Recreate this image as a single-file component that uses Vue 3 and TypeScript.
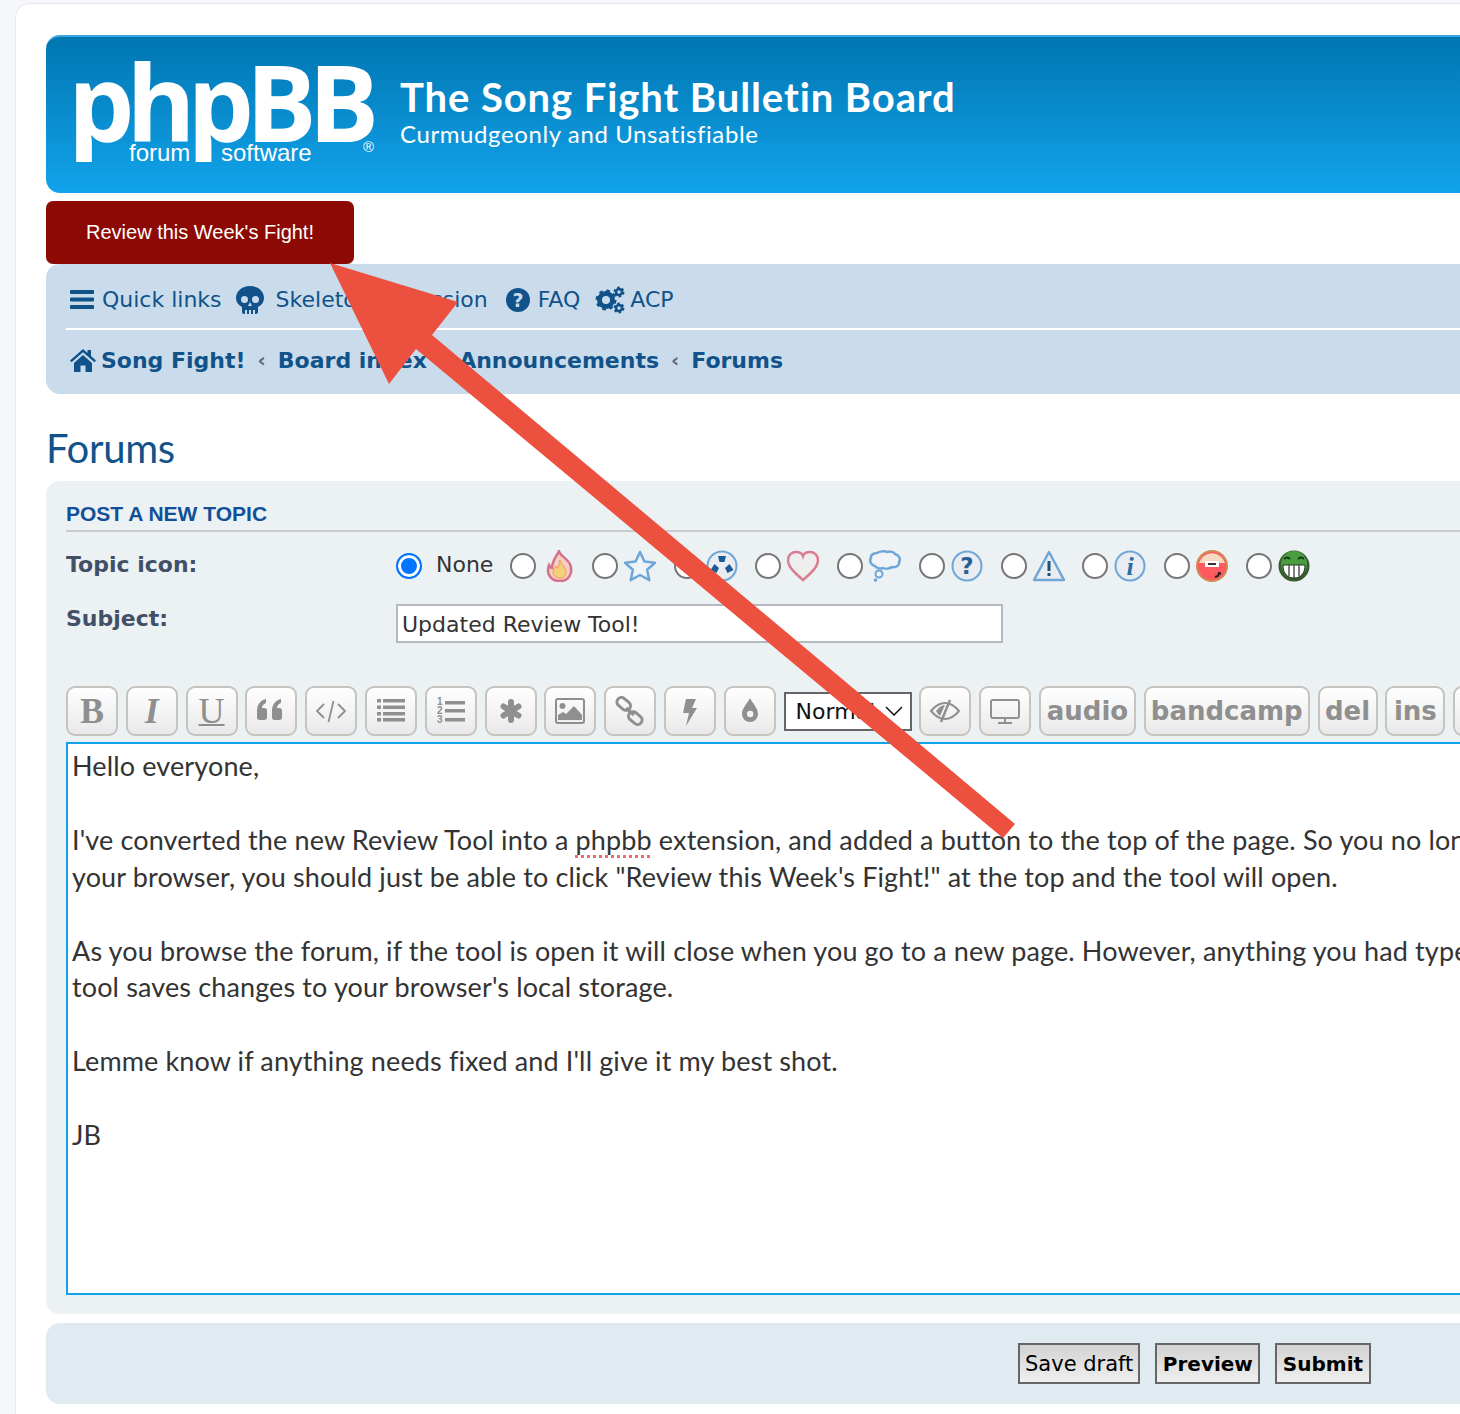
<script setup lang="ts">
interface TopicIcon {
  id: string;
}

interface ToolButton {
  id: string;
  label?: string;
  width?: number;
}

const topicIcons: TopicIcon[] = [
  { id: "fire" },
  { id: "star" },
  { id: "radio" },
  { id: "heart" },
  { id: "thought" },
  { id: "question" },
  { id: "warning" },
  { id: "info" },
  { id: "mad" },
  { id: "grin" },
];

const leftTools: ToolButton[] = [
  { id: "b", label: "B" },
  { id: "i", label: "I" },
  { id: "u", label: "U" },
  { id: "quote" },
  { id: "code" },
  { id: "list" },
  { id: "numlist" },
  { id: "star" },
  { id: "image" },
  { id: "link" },
  { id: "flash" },
  { id: "color" },
];

const rightTools: ToolButton[] = [
  { id: "spoiler" },
  { id: "video" },
  { id: "text", label: "audio", width: 97 },
  { id: "text", label: "bandcamp", width: 166 },
  { id: "text", label: "del", width: 60 },
  { id: "text", label: "ins", width: 60 },
  { id: "text", label: "sub", width: 80 },
];
</script>

<template>
  <div class="wrap">
    <header class="headerbar">
      <div class="logo">
        <span class="logo-main">phpBB</span>
        <span class="logo-forum">forum</span>
        <span class="logo-software">software</span>
        <span class="logo-reg">®</span>
      </div>
      <div class="site-desc">
        <h1>The Song Fight Bulletin Board</h1>
        <p>Curmudgeonly and Unsatisfiable</p>
      </div>
    </header>

    <a class="review-btn">Review this Week's Fight!</a>

    <nav class="navbar">
      <ul class="nav-main">
        <li class="quick-item">
          <svg class="nav-icon" width="24" height="22" viewBox="0 0 24 22">
            <rect y="1" width="24" height="4" rx="1" />
            <rect y="8.500" width="24" height="4" rx="1" />
            <rect y="16" width="24" height="4" rx="1" />
          </svg>
          Quick links
        </li>
        <li class="skull-item">
          <svg class="nav-icon" width="28" height="28" viewBox="0 0 28 28">
            <path fill-rule="evenodd" d="M14 0C6 0 0 5 0 12c0 4 2 7 6 9v5c0 1 1 2 2 2h1v-4h2v4h2v-4h2v4h2v-4h2v4h1c1 0 2-1 2-2v-5c4-2 6-5 6-9 0-7-6-12-14-12ZM8.500 10a3.500 3.500 0 1 1 0 7 3.500 3.500 0 0 1 0-7Zm11 0a3.500 3.500 0 1 1 0 7 3.500 3.500 0 0 1 0-7ZM14 16l2 4h-4Z" />
          </svg>
          Skeleton Discussion
        </li>
        <li class="faq-item">
          <svg class="nav-icon" width="24" height="24" viewBox="0 0 24 24">
            <circle cx="12" cy="12" r="12" />
            <text x="12" y="19" class="faq-mark">?</text>
          </svg>
          FAQ
        </li>
        <li class="acp-item">
          <svg class="nav-icon cogs" width="30" height="28" viewBox="0 0 30 28">
            <circle cx="11" cy="14" r="6.500" class="cog-ring" />
            <circle cx="11" cy="14" r="9" class="cog-teeth" />
            <circle cx="24" cy="6" r="3" class="cog-ring small" />
            <circle cx="24" cy="6" r="4.500" class="cog-teeth small" />
            <circle cx="24" cy="22" r="3" class="cog-ring small" />
            <circle cx="24" cy="22" r="4.500" class="cog-teeth small" />
          </svg>
          ACP
        </li>
      </ul>
      <ul class="nav-crumbs">
        <li>
          <svg class="nav-icon" width="26" height="24" viewBox="0 0 26 24">
            <path d="M13 1 0 12.500l1.500 1.700L13 4.200l11.500 10 1.500-1.700L21 8V2h-3.500v3ZM4 15v9h6.500v-6.500h5V24H22v-9L13 7Z" />
          </svg>
          Song Fight!
        </li>
        <li class="sep">‹</li>
        <li>Board index</li>
        <li class="sep">‹</li>
        <li>Announcements</li>
        <li class="sep">‹</li>
        <li>Forums</li>
      </ul>
    </nav>

    <h2 class="forum-title">Forums</h2>

    <section class="panel">
      <h3>POST A NEW TOPIC</h3>

      <div class="field topic-field">
        <label>Topic icon:</label>
        <div class="topic-icons">
          <span class="radio checked"></span>
          <span class="none-label">None</span>
          <span v-for="icon in topicIcons" :key="icon.id" class="topic-option">
            <span class="radio"></span>
            <svg width="32" height="32" viewBox="0 0 32 32" class="topic-svg">
              <template v-if="icon.id === 'fire'">
                <g transform="translate(2 0)">
                  <path d="M15 1c1 5 8 7 11 13 3 8 0 17-10 17S2 23 5 15c1 2 2 3 3 3 0-7 3-9 7-17Z" fill="#f3cfc4" stroke="#d9708a" stroke-width="2.500" />
                  <path d="M16 10c0 4 6 7 6 12 0 4-3 6-6 6s-7-2-7-6c0-3 2-4 3-6 1 1 1 2 2 2 1-2 1-5 2-8Z" fill="#f6cf7a" stroke="#ec9a52" />
                </g>
              </template>
              <template v-else-if="icon.id === 'star'">
                <path d="M16 2l4.400 9.600 10.600 1.200-7.900 7 2.200 10.400L16 25l-9.300 5.200 2.200-10.400-7.900-7 10.600-1.200Z" fill="#eef3f8" stroke="#6fa6d8" stroke-width="2.500" stroke-linejoin="round" />
              </template>
              <template v-else-if="icon.id === 'radio'">
                <circle cx="16" cy="16" r="14.500" fill="#e9edf1" stroke="#6fa6d8" stroke-width="2" />
                <path d="M12 6h8l-1.500 6h-5ZM4.500 20l4-6 4.500 4-2.500 5ZM27.500 20l-4-6-4.500 4 2.500 5Z" fill="#1d5a96" />
              </template>
              <template v-else-if="icon.id === 'heart'">
                <path d="M16 30C8 23 1 17 1 10c0-5 4-8 8-8 3 0 6 1 7 4 1-3 4-4 7-4 4 0 8 3 8 8 0 7-7 13-15 20Z" fill="#efeeee" stroke="#d97d90" stroke-width="2.500" />
              </template>
              <template v-else-if="icon.id === 'thought'">
                <path d="M8 3c3-2 8-2 10-1 3-1 7 0 8 2 4 1 6 5 4 8 1 3-3 6-7 5-2 2-7 2-9 1-3 1-7 0-8-2-4-1-6-5-4-8-1-3 3-5 6-5Z" fill="#f1f4f7" stroke="#6fa6d8" stroke-width="2.500" />
                <circle cx="10" cy="24" r="3.500" fill="#f1f4f7" stroke="#6fa6d8" stroke-width="2" />
                <circle cx="6.500" cy="30" r="1.800" fill="#6fa6d8" />
              </template>
              <template v-else-if="icon.id === 'question'">
                <circle cx="16" cy="16" r="14.500" fill="#e9edf1" stroke="#6fa6d8" stroke-width="2" />
                <text x="16" y="24" class="mark-q">?</text>
              </template>
              <template v-else-if="icon.id === 'warning'">
                <path d="M16 2 31 30H1Z" fill="#e9edf1" stroke="#6fa6d8" stroke-width="2.500" stroke-linejoin="round" />
                <rect x="14.500" y="11" width="3" height="10" fill="#1f4f80" />
                <rect x="14.500" y="23" width="3" height="3" fill="#1f4f80" />
              </template>
              <template v-else-if="icon.id === 'info'">
                <circle cx="16" cy="16" r="14.500" fill="#e9edf1" stroke="#6fa6d8" stroke-width="2" />
                <text x="16" y="25" class="mark-i">i</text>
              </template>
              <template v-else-if="icon.id === 'mad'">
                <circle cx="16" cy="16" r="15" fill="#ff5a5f" stroke="#d08a55" stroke-width="2" />
                <path d="M3 13a13.500 13.500 0 0 1 26 0Z" fill="#f3d9c2" />
                <rect x="9" y="11" width="14" height="6" rx="1" fill="#fff" />
                <rect x="12" y="13" width="8" height="2" fill="#333" />
                <path d="M19 27l3-1 1-3 2 1" fill="none" stroke="#222" stroke-width="2" />
              </template>
              <template v-else>
                <circle cx="16" cy="16" r="15.500" fill="#3a5a32" />
                <circle cx="16" cy="14" r="13" fill="#4a9e40" />
                <path d="M5 15h22c0 8-4 13-11 13S5 23 5 15Z" fill="#fff" stroke="#1d3a1d" />
                <path d="M11 15v11M16 15v13M21 15v11" stroke="#555" stroke-width="1.500" />
                <path d="M6 9q3-3 6 0M20 9q3-3 6 0" fill="none" stroke="#163a16" stroke-width="2" />
              </template>
            </svg>
          </span>
        </div>
      </div>

      <div class="field subject-field">
        <label>Subject:</label>
        <div class="subject-input">Updated Review Tool!</div>
      </div>

      <div class="toolbar">
        <button v-for="tool in leftTools" :key="tool.id" class="tool">
          <span v-if="tool.label" :class="['tool-letter', 'tool-' + tool.id]">{{ tool.label }}</span>
          <svg v-else width="34" height="34" viewBox="0 0 34 34" class="tool-svg">
            <g v-if="tool.id === 'quote'">
              <path d="M3 17c0-7 4-11 9-12v4c-3 1-4 3-4 5h2.500c1.400 0 2.500 1.100 2.500 2.500v7c0 1.400-1.100 2.500-2.500 2.500h-5C4.100 26 3 24.900 3 23.500ZM18 17c0-7 4-11 9-12v4c-3 1-4 3-4 5h2.500c1.400 0 2.500 1.100 2.500 2.500v7c0 1.400-1.100 2.500-2.500 2.500h-5c-1.400 0-2.500-1.100-2.500-2.500Z" />
            </g>
            <g v-else-if="tool.id === 'code'" class="tool-stroke" stroke-width="1.800">
              <path d="M10 10 3 17l7 7M24 10l7 7-7 7M19.500 7l-5 21" />
            </g>
            <g v-else-if="tool.id === 'list'">
              <rect x="3" y="5" width="4" height="3.500" />
              <rect x="3" y="11.500" width="4" height="3.500" />
              <rect x="3" y="18" width="4" height="3.500" />
              <rect x="3" y="24" width="4" height="3.500" />
              <rect x="9" y="5" width="22" height="3.500" />
              <rect x="9" y="11.500" width="22" height="3.500" />
              <rect x="9" y="18" width="22" height="3.500" />
              <rect x="9" y="24" width="22" height="3.500" />
            </g>
            <g v-else-if="tool.id === 'numlist'">
              <text x="3" y="11" class="num-mark">1</text>
              <text x="3" y="20" class="num-mark">2</text>
              <text x="3" y="29" class="num-mark">3</text>
              <rect x="11" y="7" width="20" height="3.500" />
              <rect x="11" y="15" width="20" height="3.500" />
              <rect x="11" y="24" width="20" height="3.500" />
            </g>
            <g v-else-if="tool.id === 'star'" class="tool-stroke" stroke-width="6" stroke-linecap="round">
              <path d="M17 8v18M9.500 12.500l15 9M24.500 12.500l-15 9" />
            </g>
            <g v-else-if="tool.id === 'image'">
              <rect x="3" y="5" width="28" height="24" rx="2" class="tool-stroke" stroke-width="2" />
              <circle cx="9.500" cy="12" r="3" />
              <path d="M5 26v-5l5-3 3 2 8-8 8 9v5Z" />
            </g>
            <g v-else-if="tool.id === 'link'" class="tool-stroke" stroke-width="3">
              <rect x="3" y="5" width="15" height="9" rx="4.500" transform="rotate(40 10 10)" />
              <rect x="15" y="20" width="15" height="9" rx="4.500" transform="rotate(40 23 24)" />
              <path d="M13 14l8 7" />
            </g>
            <g v-else-if="tool.id === 'flash'">
              <path d="M13 5h10l-4 9h5L13 32l3-13h-6Z" />
            </g>
            <g v-else-if="tool.id === 'color'">
              <path fill-rule="evenodd" d="M17 4c3 6 8 10 8 16a8 8 0 0 1-16 0c0-6 5-10 8-16Zm-3 16a3.200 3.200 0 1 0 6.400 0 3.200 3.200 0 0 0-6.400 0Z" />
            </g>
          </svg>
        </button>

        <div class="size-select">
          <span>Normal</span>
          <svg width="18" height="10" viewBox="0 0 18 10">
            <path d="M1 1l8 8 8-8" fill="none" stroke="#111" stroke-width="1.500" />
          </svg>
        </div>

        <button v-for="(tool, index) in rightTools" :key="index" class="tool" :style="tool.width ? { width: tool.width + 'px' } : undefined">
          <span v-if="tool.label" class="tool-word">{{ tool.label }}</span>
          <svg v-else-if="tool.id === 'spoiler'" width="34" height="34" viewBox="0 0 34 34" class="tool-svg">
            <g class="tool-stroke" stroke-width="2">
              <path d="M3 17c5-6 9-8 14-8s9 2 14 8c-5 6-9 8-14 8s-9-2-14-8Z" />
            </g>
            <path d="M8 17c3-4 6-6 9-6l-5 11c-1-1-3-3-4-5Z" />
            <path d="M22 6 13 28" class="tool-stroke" stroke-width="2.500" />
          </svg>
          <svg v-else width="34" height="34" viewBox="0 0 34 34" class="tool-svg">
            <g class="tool-stroke" stroke-width="2">
              <rect x="3" y="6" width="28" height="18" rx="2" />
              <path d="M17 24v4M10 29h14" />
            </g>
          </svg>
        </button>
      </div>

      <div class="message">
        <div class="msg-line">Hello everyone,</div>
        <div class="msg-line">&nbsp;</div>
        <div class="msg-line">I've converted the new Review Tool into a <span class="misspelled">phpbb</span> extension, and added a button to the top of the page. So you no longer need to install anything in</div>
        <div class="msg-line">your browser, you should just be able to click "Review this Week's Fight!" at the top and the tool will open.</div>
        <div class="msg-line">&nbsp;</div>
        <div class="msg-line">As you browse the forum, if the tool is open it will close when you go to a new page. However, anything you had typed will still be there, since the</div>
        <div class="msg-line">tool saves changes to your browser's local storage.</div>
        <div class="msg-line">&nbsp;</div>
        <div class="msg-line">Lemme know if anything needs fixed and I'll give it my best shot.</div>
        <div class="msg-line">&nbsp;</div>
        <div class="msg-line">JB</div>
      </div>
    </section>

    <section class="submit-panel">
      <button class="submit-btn">Save draft</button>
      <button class="submit-btn strong">Preview</button>
      <button class="submit-btn strong">Submit</button>
    </section>

    <svg class="arrow" width="1100" height="900" viewBox="0 0 1100 900">
      <polygon points="330,263 458,302 432,335 1015,824 1003,838 416,349 389,384" fill="#ec513f" />
    </svg>
  </div>
</template>

<style>
html,
body {
  overflow: hidden;
  height: 1414px;
  background: #f5f7fa;
}
</style>

<style scoped>
.wrap {
  box-sizing: border-box;
  position: relative;
  width: 1640px;
  min-height: 1500px;
  margin: 3px 0 0 15px;
  padding: 31px 30px 0;
  background: #fff;
  border: 1px solid #e6e9ed;
  border-radius: 14px;
  font-family: "DejaVu Sans", Verdana, sans-serif;
}

.headerbar {
  box-sizing: border-box;
  display: flex;
  height: 158px;
  padding: 29px 0 0 30px;
  color: #fff;
  background: linear-gradient(to bottom, #0076b1, #12a3eb);
  border-top: 2px solid #3ba6e0;
  border-radius: 14px;
}

.logo {
  position: relative;
  width: 298px;
  height: 100px;
  margin-right: 26px;
}

.logo-main {
  display: block;
  height: 110px;
  margin-top: -14px;
  margin-left: -8px;
  overflow: hidden;
  font-family: "Open Sans", sans-serif;
  font-size: 105px;
  font-weight: 700;
  line-height: 100px;
  letter-spacing: -8px;
}

.logo-forum,
.logo-software {
  position: absolute;
  top: 74px;
  font-family: "Liberation Sans", sans-serif;
  font-size: 24px;
  line-height: 26px;
}

.logo-forum {
  left: 53px;
}

.logo-software {
  left: 145px;
}

.logo-reg {
  position: absolute;
  top: 73px;
  left: 287px;
  font-family: "Liberation Sans", sans-serif;
  font-size: 15px;
  line-height: 16px;
}

.site-desc {
  padding-top: 9px;
}

.site-desc h1 {
  margin: 0;
  font-family: "Lato", sans-serif;
  font-size: 40px;
  font-weight: 700;
  line-height: 44px;
  letter-spacing: 0.900px;
}

.site-desc p {
  margin: 0;
  font-family: "Lato", sans-serif;
  font-size: 24px;
  line-height: 30px;
  letter-spacing: 0.600px;
}

.review-btn {
  display: block;
  width: 308px;
  height: 63px;
  margin-top: 8px;
  color: #fff;
  font-family: "Liberation Sans", sans-serif;
  font-size: 20px;
  line-height: 63px;
  text-align: center;
  background: #8c0a03;
  border-radius: 7px;
}

.navbar {
  box-sizing: border-box;
  height: 130px;
  padding: 0 20px;
  color: #105289;
  background: #cadceb;
  border-radius: 14px;
}

.nav-main,
.nav-crumbs {
  display: flex;
  align-items: center;
  margin: 0;
  padding: 0 0 0 4px;
  list-style: none;
}

.nav-main {
  box-sizing: border-box;
  height: 66px;
  padding-top: 7px;
  font-size: 22px;
  border-bottom: 2px solid #fff;
}

.nav-main li {
  display: flex;
  align-items: center;
  gap: 8px;
}

.quick-item {
  margin-right: 14px;
}

.nav-main .skull-item {
  gap: 12px;
  margin-right: 18px;
  word-spacing: -7px;
}

.faq-item {
  margin-right: 15px;
}

.nav-main .acp-item {
  gap: 5px;
}

.nav-crumbs {
  height: 60px;
  font-size: 22px;
  font-weight: 700;
}

.nav-crumbs li {
  display: flex;
  align-items: center;
  gap: 5px;
}

.nav-crumbs .sep {
  margin: 0 12px;
  color: #5a6b8c;
  font-size: 20px;
}

.nav-icon {
  flex: none;
  fill: #105289;
}

.faq-mark {
  fill: #cadceb;
  font-size: 19px;
  font-weight: 700;
  text-anchor: middle;
}

.cog-ring {
  fill: none;
  stroke: #105289;
  stroke-width: 5;
}

.cog-ring.small {
  stroke-width: 2.500;
}

.cog-teeth {
  fill: none;
  stroke: #105289;
  stroke-width: 3;
  stroke-dasharray: 3.500 3.570;
}

.cog-teeth.small {
  stroke-width: 2;
  stroke-dasharray: 2.500 2.210;
}

.forum-title {
  margin: 31px 0 9px;
  color: #105289;
  font-family: "Lato", sans-serif;
  font-size: 40px;
  font-weight: 400;
  line-height: 47px;
  letter-spacing: -0.300px;
}

.panel {
  box-sizing: border-box;
  height: 833px;
  padding: 20px 20px 0;
  background: #ecf1f3;
  border-radius: 14px;
}

.panel h3 {
  box-sizing: border-box;
  height: 31px;
  margin: 0;
  color: #115098;
  font-family: "Liberation Sans", sans-serif;
  font-size: 21px;
  font-weight: 700;
  line-height: 26px;
  border-bottom: 2px solid #ccc;
}

.field {
  display: flex;
}

.field label {
  width: 330px;
  color: #425067;
  font-size: 22px;
  font-weight: 700;
}

.topic-field {
  align-items: center;
  height: 32px;
  margin-top: 18px;
}

.topic-field label {
  position: relative;
  top: -2px;
}

.topic-icons {
  display: flex;
  align-items: center;
}

.radio {
  box-sizing: border-box;
  flex: none;
  width: 26px;
  height: 26px;
  background: #fff;
  border: 2px solid #767676;
  border-radius: 50%;
}

.radio.checked {
  background: #0075ff;
  border-color: #0075ff;
  box-shadow: inset 0 0 0 3px #fff;
}

.none-label {
  box-sizing: border-box;
  position: relative;
  top: -2px;
  width: 88px;
  padding-left: 14px;
  color: #333;
  font-size: 22px;
}

.topic-option {
  display: flex;
  flex: none;
  align-items: center;
  gap: 6px;
  width: 81.750px;
}

.topic-svg {
  flex: none;
}

.mark-q {
  fill: #2a5f98;
  font-family: "DejaVu Sans", sans-serif;
  font-size: 23px;
  font-weight: 700;
  text-anchor: middle;
}

.mark-i {
  fill: #2a6ea8;
  font-family: "Liberation Serif", serif;
  font-size: 26px;
  font-style: italic;
  font-weight: 700;
  text-anchor: middle;
}

.subject-field {
  align-items: flex-start;
  height: 39px;
  margin-top: 22px;
}

.subject-field label {
  position: relative;
  top: 1px;
  padding-top: 1px;
}

.subject-input {
  box-sizing: border-box;
  width: 607px;
  height: 39px;
  padding: 0 4px;
  color: #333;
  font-size: 22px;
  line-height: 37px;
  background: #fff;
  border: 2px solid #b4bac0;
}

.toolbar {
  display: flex;
  align-items: center;
  gap: 7.800px;
  height: 50px;
  margin-top: 43px;
}

.tool {
  box-sizing: border-box;
  display: flex;
  flex: none;
  align-items: center;
  justify-content: center;
  width: 52px;
  height: 50px;
  padding: 0;
  color: #8f8f8f;
  background: linear-gradient(to bottom, #fff, #e9e9e9);
  border: 2px solid #c7c3bf;
  border-radius: 9px;
}

.tool-letter {
  font-family: "Liberation Serif", serif;
  font-size: 36px;
  font-weight: 700;
  line-height: 1;
}

.tool-i {
  font-style: italic;
}

.tool-u {
  font-weight: 400;
  text-decoration: underline;
  text-decoration-thickness: 2px;
}

.tool-word {
  font-family: "DejaVu Sans", sans-serif;
  font-size: 26px;
  font-weight: 700;
  line-height: 1;
}

.tool-svg {
  fill: #8f8f8f;
}

.tool-stroke {
  fill: none;
  stroke: #8f8f8f;
}

.num-mark {
  font-size: 10px;
  font-weight: 700;
}

.size-select {
  box-sizing: border-box;
  display: flex;
  flex: none;
  align-items: center;
  justify-content: space-between;
  width: 128px;
  height: 39px;
  padding: 0 7px 0 10px;
  color: #111;
  font-size: 22px;
  background: #fff;
  border: 2px solid #666;
}

.message {
  box-sizing: border-box;
  height: 553px;
  margin-top: 6px;
  padding: 4px 4px;
  overflow: hidden;
  color: #333;
  font-family: "Lato", sans-serif;
  font-size: 27px;
  line-height: 36.900px;
  letter-spacing: 0.130px;
  white-space: nowrap;
  background: #fff;
  border: 2px solid #11a3ea;
}

.misspelled {
  text-decoration: underline dotted #f06a6a 3px;
  text-underline-offset: 5px;
}

.submit-panel {
  box-sizing: border-box;
  display: flex;
  gap: 15px;
  align-items: center;
  height: 81px;
  margin-top: 9px;
  padding-left: 972px;
  background: #e0eaf1;
  border-radius: 14px;
}

.submit-btn {
  box-sizing: border-box;
  height: 41px;
  padding: 0 5px;
  color: #000;
  font-family: "DejaVu Sans", sans-serif;
  font-size: 21px;
  background: linear-gradient(to bottom, #d2d2d2, #efefef);
  border: 2px solid #666;
}

.submit-btn.strong {
  padding: 0 5.500px;
  font-size: 20px;
  font-weight: 700;
}

.arrow {
  position: absolute;
  top: -4px;
  left: -16px;
  pointer-events: none;
}
</style>
